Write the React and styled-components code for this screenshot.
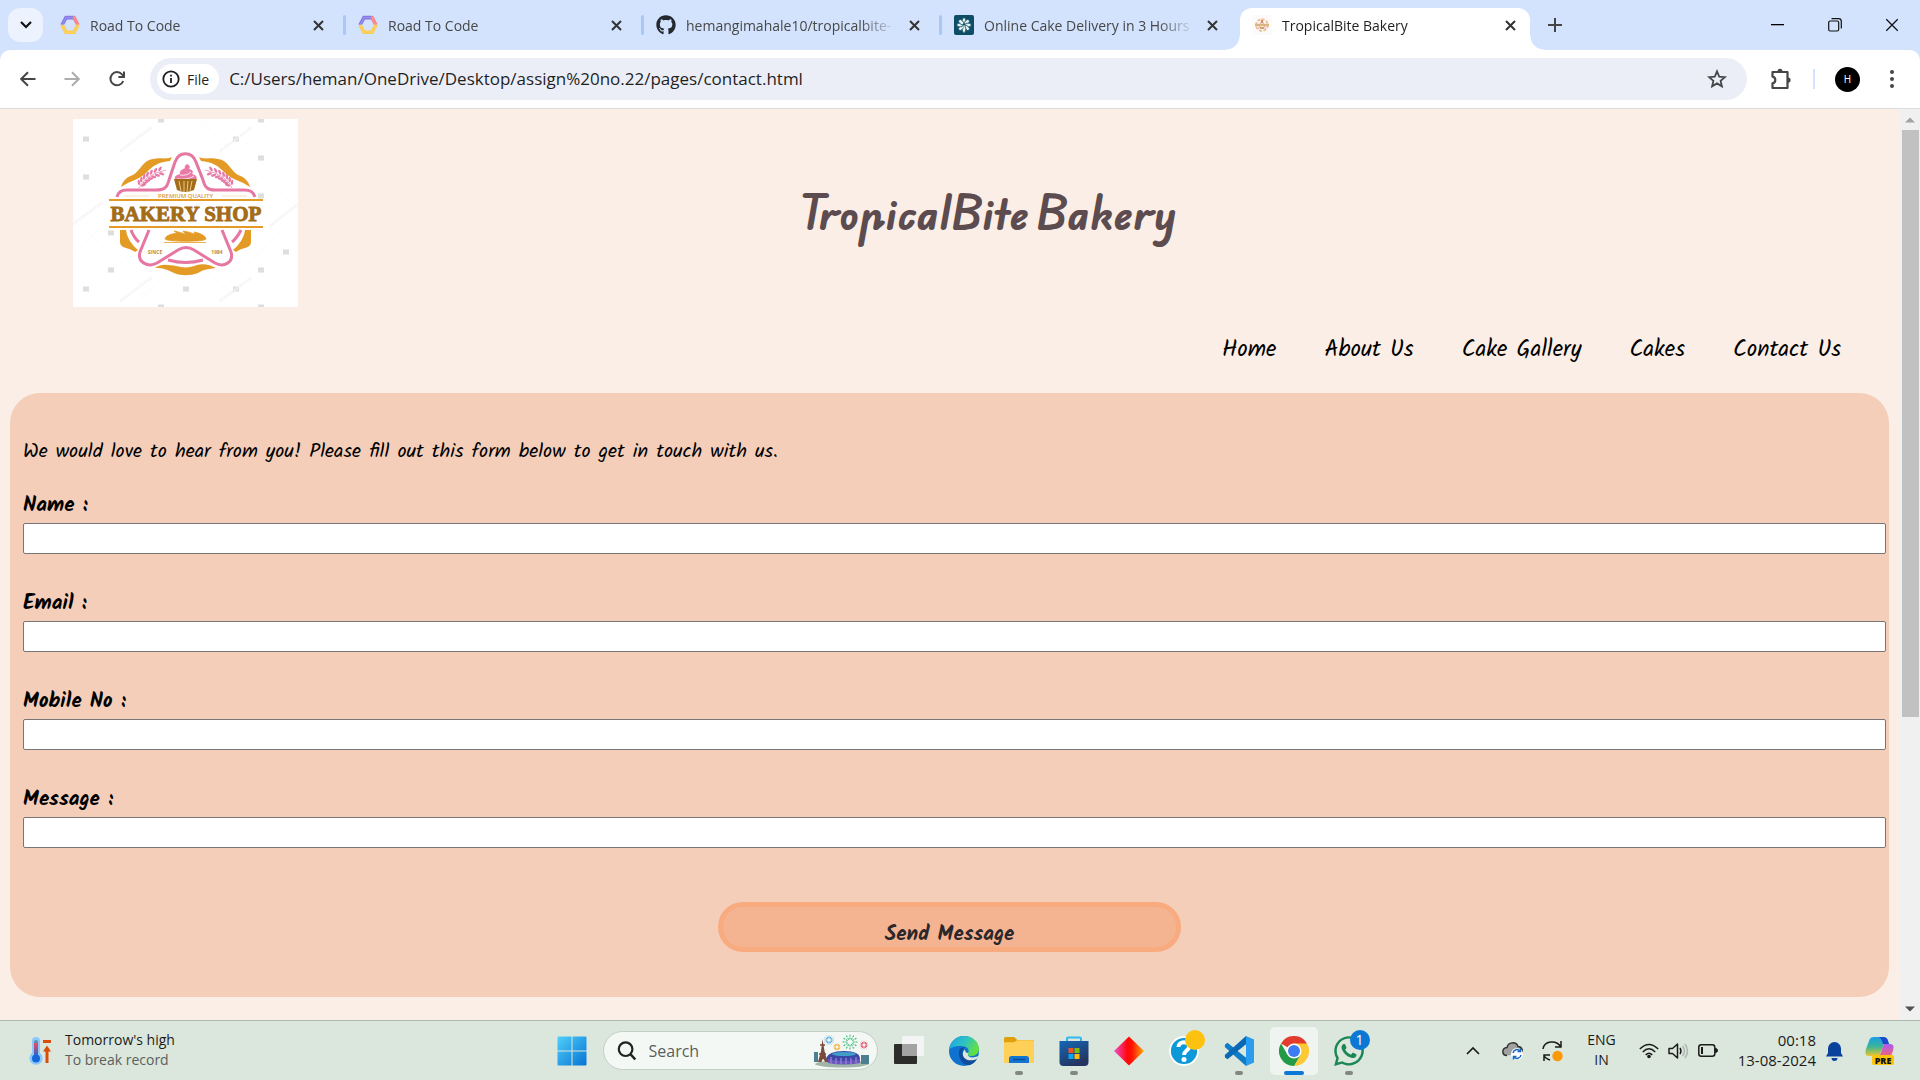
import React from "react";
import styled, { createGlobalStyle } from "styled-components";
import { FaGithub, FaWhatsapp } from "react-icons/fa";

const GlobalStyle = createGlobalStyle`
  *, *::before, *::after { box-sizing: border-box; }
  body { margin: 0; font-family: "Open Sans", "Noto Sans", sans-serif; }
  button, input { font: inherit; color: inherit; }
  button { border: 0; padding: 0; background: none; cursor: pointer; }
  a { color: inherit; text-decoration: none; }
  svg { display: block; flex: none; }
`;

const script = '"Kalam", Lato, "Open Sans", sans-serif';

/* ---------- window ---------- */

const Window = styled.div`
  display: flex;
  flex-direction: column;
  height: 100vh;
  overflow: hidden;
  background: #d3e3fd;
`;

const TabStrip = styled.div`
  display: flex;
  align-items: flex-end;
  height: 50px;
  padding-left: 8px;
  flex: none;
`;

const TabSearch = styled.button`
  display: grid;
  place-items: center;
  width: 35px;
  height: 34px;
  margin: 0 5px 8px 0;
  border-radius: 12px;
  background: #ecf2fe;
  flex: none;
`;

const TabSlot = styled.div`
  display: flex;
  align-items: flex-start;
  height: 42px;
  flex: 0 1 298px;
  min-width: 0;
`;

const Tab = styled.div`
  position: relative;
  display: flex;
  align-items: center;
  gap: 10px;
  flex: 1;
  min-width: 0;
  height: 42px;
  padding: 0 12px 8px;
  border-radius: 12px 12px 0 0;
  background: ${(p) => (p.$active ? "#fff" : "transparent")};
  color: ${(p) => (p.$active ? "#1f1f1f" : "#474747")};

  &::before,
  &::after {
    content: "";
    display: ${(p) => (p.$active ? "block" : "none")};
    position: absolute;
    bottom: 0;
    width: 14px;
    height: 14px;
  }
  &::before {
    left: -14px;
    background: radial-gradient(circle at 0 0, transparent 13px, #fff 14px);
  }
  &::after {
    right: -14px;
    background: radial-gradient(circle at 100% 0, transparent 13px, #fff 14px);
  }
`;

const TabTitle = styled.span`
  flex: 1;
  padding-top: 2px;
  overflow: hidden;
  white-space: nowrap;
  font-size: 14px;
  line-height: 20px;
  mask-image: linear-gradient(to right, #000 calc(100% - 36px), transparent);
`;

const TabClose = styled.button`
  display: grid;
  place-items: center;
  width: 16px;
  height: 16px;
`;

const TabDivider = styled.span`
  width: 3px;
  height: 20px;
  margin: 7px 0 0 5px;
  border-radius: 2px;
  background: ${(p) => (p.$hidden ? "transparent" : "#a8c7fa")};
`;

const NewTab = styled.button`
  display: grid;
  place-items: center;
  width: 34px;
  height: 34px;
  margin-bottom: 8px;
`;

const WindowControls = styled.div`
  display: flex;
  align-self: stretch;
  margin-left: auto;
`;

const WindowButton = styled.button`
  display: grid;
  place-items: center;
  width: 57px;
  height: 50px;
`;

const Toolbar = styled.div`
  display: flex;
  align-items: center;
  height: 59px;
  padding: 0 16px;
  flex: none;
  background: #fff;
  border-bottom: 1px solid #dcdcdc;
  border-radius: 10px 10px 0 0;
`;

const ToolButton = styled.button`
  display: grid;
  place-items: center;
  width: 24px;
  height: 32px;
  margin-right: ${(p) => p.$after || 0}px;
`;

const AddressBar = styled.div`
  display: flex;
  align-items: center;
  flex: 1;
  height: 42px;
  margin-right: 22px;
  padding: 0 18px 0 7px;
  border-radius: 21px;
  background: #ebeef7;
`;

const FileChip = styled.button`
  display: flex;
  align-items: center;
  gap: 7px;
  height: 30px;
  padding: 0 10px 0 5px;
  border-radius: 15px;
  background: #fff;
  color: #1f1f1f;
  font-size: 14px;
`;

const AddressInput = styled.input`
  flex: 1;
  min-width: 0;
  padding: 0 10px;
  border: 0;
  outline: 0;
  background: transparent;
  color: #1f1f1f;
  font-size: 17px;
  line-height: 24px;
`;

const ToolDivider = styled.span`
  width: 2px;
  height: 20px;
  margin-right: 20px;
  background: #d3e3fd;
`;

const Avatar = styled.button`
  width: 25px;
  height: 25px;
  margin-right: 20px;
  border-radius: 50%;
  background: #000;
  color: #fff;
  font-size: 10px;
  line-height: 25px;
  text-align: center;
`;

/* ---------- web page ---------- */

const Viewport = styled.div`
  display: flex;
  flex: 1;
  min-height: 0;
  background: #fbeee6;
`;

const Page = styled.main`
  flex: 1;
  min-width: 0;
  padding: 10px 11px 0 10px;
  overflow: hidden;
`;

const SiteHeader = styled.header`
  display: flex;
  align-items: center;
  height: 188px;
  padding: 0 214px 0 63px;
`;

const SiteTitle = styled.h1`
  flex: 1;
  margin: 0;
  color: #5c4b4f;
  font: 700 40px/50px "Edu AU VIC WA NT Hand", ${script};
  text-align: center;
`;

const SiteNav = styled.nav`
  display: flex;
  justify-content: flex-end;
  gap: 48px;
  padding: 27px 48px 26px;
  font: 400 23px/33px ${script};
  color: #000;
`;

const Panel = styled.form`
  display: flex;
  flex-direction: column;
  height: 604px;
  padding-top: 44px;
  border-radius: 30px;
  background: #f4ceb9;
`;

const Intro = styled.p`
  margin: 0 0 24px;
  padding-left: 13px;
  color: #000;
  font: 400 20px/30px ${script};
`;

const Field = styled.div`
  display: flex;
  flex-direction: column;
  height: 98px;
  padding: 0 3px 0 13px;
`;

const FieldLabel = styled.label`
  color: #000;
  font: 700 21px/30px ${script};
  margin-bottom: 2px;
  align-self: flex-start;
`;

const FieldInput = styled.input`
  width: 100%;
  height: 31px;
  padding: 4px 8px;
  border: 1px solid #767676;
  border-radius: 2px;
  background: #fff;
`;

const SendButton = styled.button`
  align-self: center;
  width: 463px;
  max-width: 100%;
  height: 50px;
  margin-top: 19px;
  padding-top: 16px;
  border: 5px solid #f7ab7f;
  border-radius: 25px;
  background: #f5b491;
  color: #2b272b;
  font: 700 21px/22px ${script};
`;

const ScrollBar = styled.div`
  display: flex;
  flex-direction: column;
  align-items: center;
  justify-content: space-between;
  width: 20px;
  padding: 8px 0;
  background: #f0f0f0;
`;

const ScrollTrack = styled.div`
  flex: 1;
  width: 17px;
  margin: 7px 0;
`;

const ScrollThumb = styled.div`
  height: 67.5%;
  background: #c1c1c1;
`;

/* ---------- taskbar ---------- */

const TaskBar = styled.footer`
  display: grid;
  grid-template-columns: 1fr auto 1fr;
  align-items: center;
  height: 60px;
  flex: none;
  border-top: 1px solid #aeb6b0;
  background: #dbe7dd;
  color: #1b1b1b;
`;

const Weather = styled.button`
  display: flex;
  align-items: center;
  justify-self: start;
  gap: 13px;
  padding-left: 29px;
  text-align: left;
`;

const Stack = styled.span`
  display: flex;
  flex-direction: column;
  padding-bottom: 2px;
  font-size: ${(p) => p.$size || 14}px;
  line-height: 20px;
  text-align: ${(p) => p.$align || "left"};
`;

const Muted = styled.span`
  color: #5a605c;
`;

const Dock = styled.div`
  display: flex;
  align-items: center;
  gap: 7px;
`;

const SearchBox = styled.label`
  display: flex;
  align-items: center;
  gap: 12px;
  width: 275px;
  height: 39px;
  padding: 0 7px 0 13px;
  border: 1px solid #c3cec6;
  border-radius: 20px;
  background: #f4f8f5;
`;

const SearchInput = styled.input`
  flex: 1;
  min-width: 0;
  padding: 0;
  border: 0;
  outline: 0;
  background: transparent;
  font-size: 16px;
  line-height: 24px;
  &::placeholder { color: #5a5f5c; opacity: 1; }
`;

const AppButton = styled.button`
  position: relative;
  display: grid;
  place-items: center;
  width: 48px;
  height: 48px;
  border-radius: 5px;
  background: ${(p) => (p.$active ? "#eff4f0" : "transparent")};

  &::after {
    content: "";
    display: ${(p) => (p.$running || p.$active ? "block" : "none")};
    position: absolute;
    bottom: 0;
    width: ${(p) => (p.$active ? 20 : 8)}px;
    height: 4px;
    border-radius: 2px;
    background: ${(p) => (p.$active ? "#0a78d4" : "#838784")};
  }
`;

const Badge = styled.span`
  position: absolute;
  top: 3px;
  right: 3px;
  width: 20px;
  height: 20px;
  border-radius: 50%;
  background: ${(p) => p.$color};
  color: #fff;
  font-size: 14px;
  line-height: 20px;
  text-align: center;
`;

const Tray = styled.div`
  display: flex;
  align-items: center;
  justify-self: end;
  padding-right: 25px;
`;

const TrayButton = styled.button`
  display: flex;
  align-items: center;
  justify-content: center;
  gap: 9px;
  margin-left: ${(p) => p.$before || 0}px;
`;

/* ---------- drawings ---------- */

const CloseIcon = ({ size = 11, color = "#333", width = 2 }) => (
  <svg width={size} height={size} viewBox="0 0 11 11" stroke={color} strokeWidth={width} fill="none">
    <path d="M1 1l9 9M10 1l-9 9" />
  </svg>
);

const HexIcon = () => (
  <svg width="20" height="20" viewBox="0 0 20 20" fill="none" strokeWidth="3.600">
    <path d="M2 10L6 2.600H13" stroke="#8579e6" />
    <path d="M13 2.600H14L18 10" stroke="#f97e83" />
    <path d="M2 10L6 17.200H14L18 10" stroke="#fbcb4b" />
    <path d="M2 10L6 2.600H14L18 10L14 17.200H6Z" stroke="#fff" strokeWidth=".5" opacity=".4" />
  </svg>
);

const FlowerIcon = () => (
  <svg width="20" height="20" viewBox="0 0 20 20">
    <rect width="20" height="20" rx="2" fill="#0e4d66" />
    <g fill="#e6f1f2" stroke="#0e4d66" strokeWidth=".8">
      {[0, 45, 90, 135, 180, 225, 270, 315].map((a) => (
        <ellipse key={a} cx="10" cy="6" rx="1.900" ry="3.200" transform={`rotate(${a} 10 10)`} />
      ))}
    </g>
    <circle cx="10" cy="10" r="1.200" fill="#0e4d66" />
    <path d="M10 10v7.500" stroke="#e6f1f2" />
  </svg>
);

const BakeryFavicon = () => (
  <svg width="20" height="20" viewBox="0 0 20 20">
    <rect width="20" height="20" fill="#fcfbfa" />
    <circle cx="10" cy="10" r="5.800" fill="none" stroke="#edc29a" strokeWidth="2" strokeDasharray="3 1.400" />
    <path d="M6.500 14L10 5l3.500 9" stroke="#f1b0ca" fill="none" strokeWidth="1.200" />
    <path d="M3 10h14" stroke="#dcb67e" strokeWidth="2.500" />
    <path d="M10 5v3M8 13h4" stroke="#c48738" strokeWidth="1.400" />
  </svg>
);

const Arrow = ({ flip, color }) => (
  <svg width="16" height="16" viewBox="0 0 16 16" fill="none" stroke={color} strokeWidth="2">
    <path d={flip ? "M.5 8h14M8 1.200L14.800 8 8 14.800" : "M15.500 8h-14M8 1.200L1.200 8 8 14.800"} />
  </svg>
);

const ReloadIcon = () => (
  <svg width="18" height="18" viewBox="0 0 18 18" fill="none" stroke="#444746" strokeWidth="2">
    <path d="M15.200 11A6.600 6.600 0 1 1 14 4.400l1.600 1.800" />
    <path d="M16 1.400V7h-5.600" />
  </svg>
);

const InfoIcon = () => (
  <svg width="18" height="18" viewBox="0 0 18 18" fill="none" stroke="#1f1f1f" strokeWidth="1.800">
    <circle cx="9" cy="9" r="7.700" />
    <path d="M9 8v5M9 4.800v1.800" />
  </svg>
);

const StarIcon = () => (
  <svg width="20" height="20" viewBox="0 0 20 20" fill="none" stroke="#444746" strokeWidth="1.800">
    <path d="M10 2.400l2.200 5.200 5.700.5-4.300 3.700 1.300 5.500L10 14.400l-4.900 2.900 1.300-5.500L2.100 8.100l5.700-.5z" />
  </svg>
);

const PuzzleIcon = () => (
  <svg width="22" height="24" viewBox="0 0 22 24">
    <path d="M2.500 5h15v16h-15v-4.600c1.700-.3 2.800-1.600 2.800-3.400s-1.100-3.100-2.800-3.400z" fill="none" stroke="#444746" strokeWidth="2.200" strokeLinejoin="round" />
    <path d="M7.500 4.500a2.500 2.700 0 0 1 5 0zM18 10.500a2.600 2.600 0 0 1 0 5.200z" fill="#444746" />
  </svg>
);

const stemPoint = (t) => {
  const u = 1 - t;
  return {
    x: u * u * 66 + 2 * u * t * 71 + t * t * 93,
    y: u * u * 69 + 2 * u * t * 56 + t * t * 51,
    angle: (Math.atan2(2 * u * -13 + 2 * t * -5, 2 * u * 5 + 2 * t * 22) * 180) / Math.PI,
  };
};

const Wheat = () => (
  <g fill="#e87aa7">
    <path d="M66 69Q71 56 93 51" fill="none" stroke="#e87aa7" strokeWidth=".700" />
    {[0.12, 0.24, 0.36, 0.48, 0.6, 0.72, 0.84].map((t) => {
      const p = stemPoint(t);
      return (
        <g key={t} transform={`translate(${p.x} ${p.y}) rotate(${p.angle})`}>
          <ellipse cx="1.500" cy="-2.600" rx="2.700" ry="1.300" transform="rotate(-38 1.500 -2.600)" />
          <ellipse cx="1.500" cy="2.600" rx="2.700" ry="1.300" transform="rotate(38 1.500 2.600)" />
        </g>
      );
    })}
  </g>
);

const BakeryLogo = () => {
  const marks = [
    [13, 20], [163, 20], [188, 39], [13, 58], [188, 77], [38, 114], [213, 133],
    [38, 151], [188, 151], [13, 170], [113, 170], [163, 170], [88, 1], [188, 1], [88, 188], [188, 188],
  ];
  return (
    <svg width="225" height="188" viewBox="0 0 225 188" role="img" aria-label="Bakery Shop logo">
      <rect width="225" height="188" fill="#fff" />
      <g stroke="#fafafa" strokeWidth=".700">
        <path d="M0 60L62 0M0 135L138 0M0 188L200 0M60 188L225 24M130 188L225 96M50 0L225 165M0 25L172 188M0 100L95 188M125 0L225 90" />
      </g>
      <g fill="#dedede">
        {marks.map(([x, y]) => <rect key={`${x}-${y}`} x={x - 3} y={y - 2.500} width="6" height="5" />)}
      </g>
      <g fill="none" stroke="#f3f3f3" strokeWidth="3" strokeDasharray="1.500 1">
        <path d="M47 32l32-24M147 32l32-24M0 105l30-22M97 107l32-24M197 107l28-22M47 182l32-24M147 182l32-24" />
      </g>
      <g fill="#e39b25">
        <path d="M48 68C50 61 54 58 60 56C68 51 70 41 80 40C88 38 92 41 99 38L97 42C86 43 81 46 75 52C67 61 58 61 48 68Z" />
        <path d="M177 68C175 61 171 58 165 56C157 51 155 41 145 40C137 38 133 41 126 38L128 42C139 43 144 46 150 52C158 61 167 61 177 68Z" />
        <path d="M47 111H53C54 119 59 126 65 131L62 133C56 128 47 130 47 123Z" />
        <path d="M178 111H172C171 119 166 126 160 131L163 133C169 128 178 130 178 123Z" />
        <path d="M82 149C88 144 96 146 103 147C110 149 117 149 124 146C131 144 137 146 143 149C134 150 130 151 125 154C117 157 108 157 101 154C95 151 91 149 82 149Z" />
      </g>
      <g fill="none" stroke="#e676a2" strokeWidth="3">
        <path d="M44 78C45 73 48 71 54 71H83C91 71 94 69 96 61L102 43C106 32 119 32 123 43L130 61C132 69 135 71 142 71H171C178 71 180 73 182 78" />
        <path d="M76 111L67 133C64 143 75 149 84 144L105 131Q113 126 121 131L142 144C151 149 161 143 158 133L149 111" />
        <path d="M58 111Q61 119 66 123M168 111Q164 119 159 123M95 141Q113 146 130 141" />
      </g>
      <Wheat />
      <g transform="translate(225 0) scale(-1 1)"><Wheat /></g>
      <path d="M102 60C101 56 105 56 107 55C106 51 111 50 112 49C111 47 113 46 114 45C118 47 117 49 116 50C121 51 120 54 119 55C124 56 125 60 122 61Z" fill="#e87aa7" />
      <path d="M107 56Q114 57 118 53M104 60Q115 61 121 57" stroke="#fff" strokeWidth=".800" fill="none" />
      <path d="M101 60H124L121 71Q112 75 104 71Z" fill="#a36c16" />
      <path d="M106 62L108 72M111 62V73M115 62L114 73M119 62L117 72" stroke="#f1d49a" strokeWidth=".900" />
      <path d="M51 77H76M149 77H174" stroke="#f5dfc0" strokeWidth="1" />
      <text x="112.500" y="79" textAnchor="middle" fontFamily="Open Sans, sans-serif" fontSize="6" fontWeight="600" fill="#d69a3f">PREMIUM QUALITY</text>
      <path d="M36 81H190M36 108H190" stroke="#e39b25" strokeWidth="2" />
      <text x="113" y="102" textAnchor="middle" fontFamily="Liberation Serif, serif" fontSize="21" fontWeight="700" fill="#a36c16" stroke="#a36c16" strokeWidth=".900">BAKERY SHOP</text>
      <path d="M92 120C93 116 99 115 104 114L101 112C106 113 110 114 113 116L110 112C116 113 120 114 122 116L121 113C127 114 133 117 133 120C132 123 94 123 92 120ZM91 123.500H133" fill="#e39b25" stroke="#e39b25" strokeWidth=".800" />
      <text x="82" y="135" textAnchor="middle" fontFamily="Open Sans, sans-serif" fontSize="5" fontWeight="700" fill="#c38b34">SINCE</text>
      <text x="144" y="135" textAnchor="middle" fontFamily="Open Sans, sans-serif" fontSize="5" fontWeight="700" fill="#c38b34">1984</text>
    </svg>
  );
};

const ScrollArrow = ({ down }) => (
  <svg width="10" height="6" viewBox="0 0 10 6">
    <path d={down ? "M0 .5h10l-5 5z" : "M0 5.500h10l-5-5z"} fill={down ? "#505050" : "#a3a3a3"} />
  </svg>
);

const WeatherIcon = () => (
  <svg width="23" height="30" viewBox="0 0 23 30">
    <defs>
      <linearGradient id="thermo" x1="0" y1="0" x2="0" y2="1">
        <stop offset="0" stopColor="#f2495b" />
        <stop offset="1" stopColor="#1467d8" />
      </linearGradient>
    </defs>
    <path d="M3 5a4 4 0 0 1 8 0v12a6.600 6.600 0 1 1-8 0z" fill="#8cc8fb" />
    <rect x="5" y="4" width="4" height="5" rx="2" fill="#5b8fb0" />
    <rect x="5" y="7" width="4" height="15" fill="url(#thermo)" />
    <circle cx="7" cy="22.500" r="4" fill="#1467d8" />
    <path d="M14 5.500h8" stroke="#dd4d0a" strokeWidth="3" />
    <path d="M18 27V12" stroke="#dd4d0a" strokeWidth="3" />
    <path d="M14 15.500l4-6 4 6z" fill="#dd4d0a" />
  </svg>
);

const StartIcon = () => (
  <svg width="30" height="30" viewBox="0 0 30 30">
    <defs>
      <linearGradient id="win" x1="0" y1="0" x2="1" y2="1">
        <stop offset="0" stopColor="#4fd0fb" />
        <stop offset="1" stopColor="#0672d2" />
      </linearGradient>
    </defs>
    <path d="M.5 1.500a1 1 0 0 1 1-1H14.500v14H.5zM15.500.5h13a1 1 0 0 1 1 1v13h-14zM.5 15.500h14v14h-13a1 1 0 0 1-1-1zM15.500 15.500h14v13a1 1 0 0 1-1 1h-13z" fill="url(#win)" />
  </svg>
);

const SearchIcon = () => (
  <svg width="20" height="20" viewBox="0 0 20 20" fill="none" stroke="#222" strokeWidth="2.200">
    <circle cx="8.600" cy="8.200" r="6.800" />
    <path d="M13.300 13l5 5.500" strokeWidth="2.600" />
  </svg>
);

const Burst = ({ x, y, r, color }) => (
  <g stroke={color} strokeWidth="1">
    {[0, 30, 60, 90, 120, 150, 180, 210, 240, 270, 300, 330].map((a) => (
      <path key={a} d={`M${x} ${y - r * 0.35}V${y - r}`} transform={`rotate(${a} ${x} ${y})`} strokeDasharray="2 .8" />
    ))}
  </g>
);

const CityArt = () => (
  <svg width="57" height="34" viewBox="0 0 57 34">
    <Burst x={16} y={6} r={5} color="#4aa3dc" />
    <Burst x={37} y={8} r={7.500} color="#2fb872" />
    <Burst x={24} y={13} r={4} color="#f2b23c" />
    <Burst x={51} y={11} r={4.500} color="#e24f6d" />
    <ellipse cx="29" cy="30" rx="27" ry="3.500" fill="#9fb5a8" />
    <path d="M1 18h4v10H1zM48 21h8v9h-8z" fill="#4d7f90" />
    <path d="M13 25Q15 17 31 17T47 25V28H13Z" fill="#3b48a5" />
    <ellipse cx="31" cy="20" rx="12" ry="2" fill="#3f9fc8" />
    <path d="M15 25q15 4 32 0v4q-16 3-32 0z" fill="#6757bd" />
    <path d="M18 23v6M23 24v6M28 24v6M33 24v6M38 24v6M43 23v6" stroke="#9c79d8" strokeWidth="1.400" />
    <path d="M9.500 5L8 17L5 28H8.500Q10 22 12 28H14.500L11.500 17Z" fill="#7a4a3c" />
    <path d="M7 11h5M6 20h7" stroke="#7a4a3c" strokeWidth="1.500" />
  </svg>
);

const TaskViewIcon = () => (
  <svg width="30" height="30" viewBox="0 0 30 30">
    <rect x="0" y="8" width="23" height="20" rx="1" fill="#2c2c2b" />
    <rect x="8" y="0" width="22" height="20" rx="1" fill="#f5f5f5" fillOpacity=".92" />
    <path d="M8 8h15v12H8z" fill="#a3a3a3" />
  </svg>
);

const EdgeIcon = () => (
  <svg width="30" height="30" viewBox="0 0 30 30">
    <defs>
      <linearGradient id="edgeTop" x1="0" y1="0" x2="1" y2=".4">
        <stop offset="0" stopColor="#1c9fe6" />
        <stop offset=".55" stopColor="#2cc3c6" />
        <stop offset="1" stopColor="#62de45" />
      </linearGradient>
    </defs>
    <circle cx="15" cy="15" r="15" fill="#0f72cf" />
    <path d="M0 14C1 5 8 0 15 0c9 0 15 6 15 13 0 4-3 7-7 7-4 0-5-1.500-4-3 1.500-2 .5-6-4-6.500C9 9.500 3 10 0 14z" fill="url(#edgeTop)" />
    <path d="M10 15c-1 7 3 14 10 14.200 4-1.200 6.500-3.400 8-6.500-5 3-15 1.500-14.500-7 .1-2.200 1.200-3.800 2.500-4.500-3-.4-5.600 1-6 3.800z" fill="#0f4c9c" />
    <path d="M28 22.700c2.200-3.400.5-2.500-1-2-5 2-9-.3-8-3.700-1.500 0-3-1-3-3.500-2.500 2-3 5.500-1 8 3 3.600 9 3.400 13 1.200z" fill="#dbe7dd" />
  </svg>
);

const FolderIcon = () => (
  <svg width="30" height="27" viewBox="0 0 30 27">
    <path d="M0 1.500A1.500 1.500 0 0 1 1.500 0h8.800l3 3h15A1.500 1.500 0 0 1 30 4.500V10H0z" fill="#e0a00c" />
    <path d="M0 5.200h10l3-2h15.500A1.500 1.500 0 0 1 30 4.700V26H0z" fill="#fed057" />
    <path d="M5 26v-4.500A2.500 2.500 0 0 1 7.500 19h15a2.500 2.500 0 0 1 2.500 2.500V26z" fill="#1275d1" />
    <path d="M9 22.500h12" stroke="#0b4e97" strokeWidth="1.500" />
  </svg>
);

const StoreIcon = () => (
  <svg width="30" height="30" viewBox="0 0 30 30">
    <defs>
      <linearGradient id="bag" x1="0" y1="0" x2=".5" y2="1">
        <stop offset="0" stopColor="#1468b8" />
        <stop offset="1" stopColor="#24335f" />
      </linearGradient>
    </defs>
    <path d="M8 6V2.800A1.300 1.300 0 0 1 9.300 1.500h11.400A1.300 1.300 0 0 1 22 2.800V6" fill="none" stroke="#2fb9ee" strokeWidth="2" />
    <path d="M.5 5h29v21a4 4 0 0 1-4 4h-21a4 4 0 0 1-4-4z" fill="url(#bag)" />
    <path d="M9.500 12h5v5h-5z" fill="#f25325" />
    <path d="M15.500 12h5v5h-5z" fill="#80bb08" />
    <path d="M9.500 18h5v5h-5z" fill="#08a6f0" />
    <path d="M15.500 18h5v5h-5z" fill="#ffba0c" />
  </svg>
);

const DiamondIcon = () => (
  <svg width="30" height="30" viewBox="0 0 30 30">
    <defs>
      <linearGradient id="gem">
        <stop offset="0" stopColor="#f04fd0" />
        <stop offset=".45" stopColor="#ff0707" />
        <stop offset=".6" stopColor="#ff1505" />
        <stop offset="1" stopColor="#fbab0c" />
      </linearGradient>
    </defs>
    <path d="M15 .5L30 15 15 29.500 0 15z" fill="url(#gem)" />
  </svg>
);

const HelpIcon = () => (
  <svg width="30" height="30" viewBox="0 0 30 30">
    <circle cx="15" cy="15" r="14" fill="#0d98d8" stroke="#fff" strokeWidth="1.800" />
    <path d="M9.500 11c0-6.500 11-6 10.500 0-.3 3.500-5 3.600-5 8" fill="none" stroke="#fff" strokeWidth="4" />
    <circle cx="15" cy="23.500" r="2.500" fill="#fff" />
  </svg>
);

const CodeIcon = () => (
  <svg width="30" height="30" viewBox="0 0 30 30">
    <path d="M1 8.500l2.500-1.800L22 21.500V30L.800 11z" fill="#0f7cc6" />
    <path d="M1 21.500l2.500 1.800L22 8.500V0L.800 19z" fill="#0a68b4" />
    <path d="M22 0l8 3.500v23L22 30z" fill="#2a9df0" />
    <path d="M22 8.500v13L14 15z" fill="#dbe7dd" />
  </svg>
);

const ChromeIcon = () => (
  <svg width="30" height="30" viewBox="0 0 30 30">
    <path d="M15 15L2 7.500A15 15 0 0 1 28 7.500Z" fill="#e33b2e" />
    <path d="M15 7.500H28A15 15 0 0 1 15 30L21.500 18.700Z" fill="#fcc934" />
    <path d="M8.500 18.700L2 7.500A15 15 0 0 0 15 30L21.500 18.700Z" fill="#249a48" />
    <circle cx="15" cy="15" r="7.500" fill="#fff" />
    <circle cx="15" cy="15" r="6" fill="#3c7cf0" />
  </svg>
);

const ChevronUp = () => (
  <svg width="14" height="9" viewBox="0 0 14 9" fill="none" stroke="#1b1b1b" strokeWidth="1.700">
    <path d="M1 8l6-6 6 6" />
  </svg>
);

const CloudIcon = () => (
  <svg width="22" height="20" viewBox="0 0 22 20">
    <path d="M5 14.500C-.5 14.500-.5 7 5 6.500 6 1 14 0 16 5.500c5 .5 5 5 3 7.500" fill="#a1a1a1" stroke="#333" strokeWidth="1.500" />
    <circle cx="15" cy="13" r="6" fill="#fff" />
    <path d="M11 12a4 4 0 0 1 7-2M19 14a4 4 0 0 1-7 2M18.500 7.500V10.500H15.500M11.500 18.500v-3h3" fill="none" stroke="#1769c5" strokeWidth="1.500" />
  </svg>
);

const SyncIcon = () => (
  <svg width="22" height="22" viewBox="0 0 22 22" fill="none" stroke="#1b1b1b" strokeWidth="1.500">
    <path d="M1 9C2 1 14-1 19 7M19 1v6h-6M8 20C5 19 3 18 2 15.500M2 21v-6h6" />
    <circle cx="15.500" cy="16" r="5.200" fill="#fb9808" stroke="none" />
  </svg>
);

const WifiIcon = () => (
  <svg width="20" height="16" viewBox="0 0 20 16" fill="none" stroke="#1b1b1b" strokeWidth="1.500">
    <path d="M.800 6Q10-3 19.200 6M3.800 9Q10 2.500 16.200 9M6.700 12Q10 8.500 13.300 12" />
    <circle cx="10" cy="13.500" r="1.800" fill="#1b1b1b" stroke="none" />
  </svg>
);

const VolumeIcon = () => (
  <svg width="21" height="18" viewBox="0 0 21 18" fill="none" stroke="#1b1b1b" strokeWidth="1.500">
    <path d="M1 6.500h3.500L9.500 2v14l-5-4.500H1z" strokeLinejoin="round" />
    <path d="M12 6q2 3 0 6" />
    <path d="M14.500 4q4 5 0 10M17 2q5 7 0 14" stroke="#adb6af" />
  </svg>
);

const BatteryIcon = () => (
  <svg width="20" height="13" viewBox="0 0 20 13">
    <rect x=".8" y=".8" width="16" height="11.400" rx="2.500" fill="none" stroke="#1b1b1b" strokeWidth="1.500" />
    <rect x="3" y="3" width="2" height="7" fill="#1b1b1b" />
    <path d="M17.500 4.500a2 2 0 0 1 0 4z" fill="#1b1b1b" stroke="#1b1b1b" />
  </svg>
);

const BellIcon = () => (
  <svg width="17" height="20" viewBox="0 0 17 20" fill="#0a419b">
    <path d="M2 7.500a6.500 6.500 0 0 1 13 0V12l2 3.500H0L2 12zM5.500 17h6a3 3 0 0 1-6 0z" />
  </svg>
);

const CopilotIcon = () => (
  <svg width="30" height="30" viewBox="0 0 30 30">
    <defs>
      <linearGradient id="copL" x1="0" y1="0" x2="0" y2="1">
        <stop offset="0" stopColor="#1b9ce8" />
        <stop offset=".5" stopColor="#39b597" />
        <stop offset="1" stopColor="#ecc72c" />
      </linearGradient>
      <linearGradient id="copR" x1="0" y1="0" x2="0" y2="1">
        <stop offset="0" stopColor="#a95cf0" />
        <stop offset="1" stopColor="#f2647a" />
      </linearGradient>
    </defs>
    <path d="M9 1h9c3 0 4 1 5 4l1 3h-5L14 20H4c-4 0-4-3-3-7L4 5c1-3 2-4 5-4z" fill="url(#copL)" />
    <path d="M14 1h4c3 0 4 1 5 4l1 3h-6c-1-3-2-6-4-7z" fill="#1d49cd" />
    <path d="M19 8h6c4 0 4 3 3 7l-2 5H12c3 0 4-3 5-7z" fill="url(#copR)" />
    <rect x="7" y="19" width="22" height="10" rx="2" fill="#fcc50d" />
    <text x="18" y="27.500" textAnchor="middle" fontFamily="Open Sans, sans-serif" fontSize="9" fontWeight="800" fill="#111">PRE</text>
  </svg>
);

/* ---------- data ---------- */

const tabs = [
  { title: "Road To Code", icon: <HexIcon /> },
  { title: "Road To Code", icon: <HexIcon /> },
  { title: "hemangimahale10/tropicalbite-", icon: <FaGithub size={20} color="#24292f" /> },
  { title: "Online Cake Delivery in 3 Hours", icon: <FlowerIcon />, last: true },
  { title: "TropicalBite Bakery", icon: <BakeryFavicon />, active: true, last: true },
];

const links = ["Home", "About Us", "Cake Gallery", "Cakes", "Contact Us"];

const fields = [
  { id: "name", label: "Name :", type: "text" },
  { id: "email", label: "Email :", type: "email" },
  { id: "mobile", label: "Mobile No :", type: "tel" },
  { id: "message", label: "Message :", type: "text" },
];

const apps = [
  { name: "Task view", icon: <TaskViewIcon /> },
  { name: "Edge", icon: <EdgeIcon /> },
  { name: "File Explorer", icon: <FolderIcon />, running: true },
  { name: "Store", icon: <StoreIcon />, running: true },
  { name: "Diamond", icon: <DiamondIcon /> },
  { name: "Help", icon: <HelpIcon />, badge: "#fdc20f" },
  { name: "Code", icon: <CodeIcon />, running: true },
  { name: "Chrome", icon: <ChromeIcon />, active: true },
  { name: "WhatsApp", icon: <FaWhatsapp size={34} color="#1a8754" />, running: true, badge: "#0a78d4", count: "1" },
];

export default function App() {
  return (
    <Window>
      <GlobalStyle />
      <TabStrip>
        <TabSearch aria-label="Search tabs">
          <svg width="12" height="8" viewBox="0 0 12 8" fill="none" stroke="#111" strokeWidth="2.200">
            <path d="M1 1l5 5 5-5" />
          </svg>
        </TabSearch>
        {tabs.map((t, i) => (
          <TabSlot key={i}>
            <Tab $active={t.active}>
              {t.icon}
              <TabTitle>{t.title}</TabTitle>
              <TabClose aria-label="Close tab"><CloseIcon /></TabClose>
            </Tab>
            <TabDivider $hidden={t.last} />
          </TabSlot>
        ))}
        <NewTab aria-label="New tab">
          <svg width="14" height="14" viewBox="0 0 14 14" stroke="#444" strokeWidth="2"><path d="M7 0v14M0 7h14" /></svg>
        </NewTab>
        <WindowControls>
          <WindowButton aria-label="Minimise">
            <svg width="13" height="2" viewBox="0 0 13 2"><path d="M0 0h13v1.300H0z" /></svg>
          </WindowButton>
          <WindowButton aria-label="Restore">
            <svg width="14" height="14" viewBox="0 0 14 14" fill="none" stroke="#111" strokeWidth="1.200">
              <rect x=".7" y="3" width="10" height="10" rx="1.500" />
              <path d="M3.500.7h7a2.800 2.800 0 0 1 2.800 2.800v7" />
            </svg>
          </WindowButton>
          <WindowButton aria-label="Close"><CloseIcon size={14} width={1} color="#111" /></WindowButton>
        </WindowControls>
      </TabStrip>

      <Toolbar>
        <ToolButton $after={20} aria-label="Back"><Arrow color="#444746" /></ToolButton>
        <ToolButton $after={21} aria-label="Forward"><Arrow flip color="#adadad" /></ToolButton>
        <ToolButton $after={21} aria-label="Reload"><ReloadIcon /></ToolButton>
        <AddressBar>
          <FileChip><InfoIcon />File</FileChip>
          <AddressInput aria-label="Address" defaultValue="C:/Users/heman/OneDrive/Desktop/assign%20no.22/pages/contact.html" />
          <ToolButton aria-label="Bookmark"><StarIcon /></ToolButton>
        </AddressBar>
        <ToolButton $after={20} aria-label="Extensions"><PuzzleIcon /></ToolButton>
        <ToolDivider />
        <Avatar aria-label="Profile">H</Avatar>
        <ToolButton aria-label="Menu">
          <svg width="4" height="18" viewBox="0 0 4 18" fill="#444746"><circle cx="2" cy="2" r="2" /><circle cx="2" cy="9" r="2" /><circle cx="2" cy="16" r="2" /></svg>
        </ToolButton>
      </Toolbar>

      <Viewport>
        <Page>
          <SiteHeader>
            <BakeryLogo />
            <SiteTitle>TropicalBite Bakery</SiteTitle>
          </SiteHeader>
          <SiteNav>
            {links.map((l) => <a key={l} href="#">{l}</a>)}
          </SiteNav>
          <Panel onSubmit={(e) => e.preventDefault()}>
            <Intro>We would love to hear from you! Please fill out this form below to get in touch with us.</Intro>
            {fields.map((f) => (
              <Field key={f.id}>
                <FieldLabel htmlFor={f.id}>{f.label}</FieldLabel>
                <FieldInput id={f.id} type={f.type} />
              </Field>
            ))}
            <SendButton type="submit">Send Message</SendButton>
          </Panel>
        </Page>
        <ScrollBar>
          <ScrollArrow />
          <ScrollTrack><ScrollThumb /></ScrollTrack>
          <ScrollArrow down />
        </ScrollBar>
      </Viewport>

      <TaskBar>
        <Weather>
          <WeatherIcon />
          <Stack>
            <span>Tomorrow's high</span>
            <Muted>To break record</Muted>
          </Stack>
        </Weather>
        <Dock>
          <AppButton aria-label="Start"><StartIcon /></AppButton>
          <SearchBox>
            <SearchIcon />
            <SearchInput aria-label="Search" placeholder="Search" />
            <CityArt />
          </SearchBox>
          {apps.map((a) => (
            <AppButton key={a.name} aria-label={a.name} $running={a.running} $active={a.active}>
              {a.icon}
              {a.badge && <Badge $color={a.badge}>{a.count}</Badge>}
            </AppButton>
          ))}
        </Dock>
        <Tray>
          <TrayButton aria-label="Hidden icons"><ChevronUp /></TrayButton>
          <TrayButton $before={22} aria-label="OneDrive"><CloudIcon /></TrayButton>
          <TrayButton $before={18} aria-label="Updates"><SyncIcon /></TrayButton>
          <TrayButton $before={23}>
            <Stack $align="center"><span>ENG</span><span>IN</span></Stack>
          </TrayButton>
          <TrayButton $before={23} aria-label="Network, sound and battery">
            <WifiIcon /><VolumeIcon /><BatteryIcon />
          </TrayButton>
          <TrayButton $before={20}>
            <Stack $size={15} $align="right"><span>00:18</span><span>13-08-2024</span></Stack>
          </TrayButton>
          <TrayButton $before={10} aria-label="Notifications"><BellIcon /></TrayButton>
          <TrayButton $before={22} aria-label="Copilot"><CopilotIcon /></TrayButton>
        </Tray>
      </TaskBar>
    </Window>
  );
}
